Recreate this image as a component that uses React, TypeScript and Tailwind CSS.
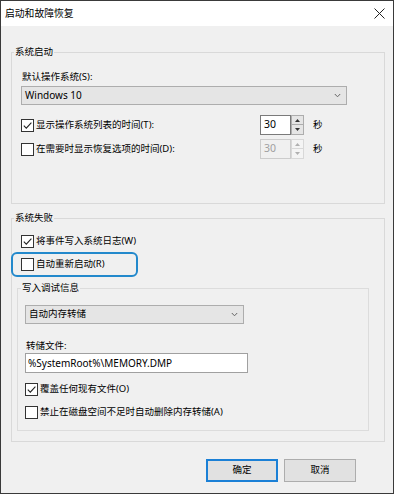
import React from "react";

function Check({ checked }: { checked?: boolean }) {
  return (
    <span className="w-[13px] h-[13px] border border-[#333333] bg-white flex items-center justify-center shrink-0">
      {checked && (
        <svg width="11" height="11" viewBox="0 0 11 11">
          <path d="M1.8 5.6 L4.3 8.1 L9.4 2.6" fill="none" stroke="#222" strokeWidth="1.1" />
        </svg>
      )}
    </span>
  );
}

function Chevron() {
  return (
    <svg width="7" height="5" viewBox="0 0 7 5">
      <path d="M0.8 1 L3.5 3.8 L6.2 1" fill="none" stroke="#666" strokeWidth="1" />
    </svg>
  );
}

function Tri({ up, color }: { up?: boolean; color: string }) {
  return (
    <svg width="5" height="3" viewBox="0 0 5 3">
      <path d={up ? "M0 3 L2.5 0 L5 3 Z" : "M0 0 L2.5 3 L5 0 Z"} fill={color} />
    </svg>
  );
}

function Spin({ disabled }: { disabled?: boolean }) {
  if (disabled) {
    return (
      <div className="flex h-[20px]">
        <div className="w-[31px] h-[20px] border border-[#cccccc] bg-[#f0f0f0] text-[#a0a0a0] pl-[3px] leading-[17px] text-[10.5px]">30</div>
        <div className="flex flex-col w-[13px] h-[20px]">
          <div className="h-[10px] border border-[#d8d8d8] bg-[#f4f4f4] flex items-center justify-center"><Tri up color="#b0b0b0" /></div>
          <div className="h-[10px] border border-t-0 border-[#d8d8d8] bg-[#f4f4f4] flex items-center justify-center"><Tri color="#b0b0b0" /></div>
        </div>
      </div>
    );
  }
  return (
    <div className="flex h-[20px]">
      <div className="w-[31px] h-[20px] border border-[#7a7a7a] bg-white text-black pl-[3px] leading-[17px] text-[10.5px]">30</div>
      <div className="flex flex-col w-[13px] h-[20px]">
        <div className="h-[10px] border border-[#adadad] bg-[#e5e5e5] flex items-center justify-center"><Tri up color="#333" /></div>
        <div className="h-[10px] border border-t-0 border-[#adadad] bg-[#e5e5e5] flex items-center justify-center"><Tri color="#333" /></div>
      </div>
    </div>
  );
}

export default function App() {
  return (
    <div className="w-[394px] h-[494px] border border-[#3a3a3a] bg-[#f0f0f0] text-[9.5px] text-black font-['Noto_Sans','Noto_Sans_CJK_SC',sans-serif] flex flex-col overflow-hidden">
      {/* Title bar */}
      <div className="h-[25px] bg-white flex items-center justify-between pl-[4px] pr-[7px] shrink-0">
        <span className="text-[9.8px] leading-[14px]">启动和故障恢复</span>
        <svg width="11" height="11" viewBox="0 0 11 11" className="mr-[1px]">
          <path d="M0.5 0.5 L10.5 10.5 M10.5 0.5 L0.5 10.5" stroke="#222" strokeWidth="1" />
        </svg>
      </div>

      {/* Group 1 */}
      <fieldset className="mt-[18px] ml-[10px] w-[374px] border border-[#d9d9d9]">
        <legend className="ml-[2px] px-[1px] leading-[16px]">系统启动</legend>
        <div className="flex flex-col pl-[9px] pt-[9px] pb-[44px]">
          <div className="leading-[16px] pl-[1px]">默认操作系统(S):</div>
          <div className="mt-[1px] w-[326px] h-[19px] border border-[#adadad] bg-[#e5e5e5] flex items-center justify-between pl-[3px] pr-[5px]">
            <span className="text-[10px]">Windows 10</span>
            <Chevron />
          </div>
          <div className="mt-[10px] flex items-center h-[20px]">
            <div className="w-[239px] flex items-center gap-[2px]">
              <Check checked />
              <span>显示操作系统列表的时间(T):</span>
            </div>
            <Spin />
            <span className="ml-[9px]">秒</span>
          </div>
          <div className="mt-[4px] flex items-center h-[20px]">
            <div className="w-[239px] flex items-center gap-[2px]">
              <Check />
              <span>在需要时显示恢复选项的时间(D):</span>
            </div>
            <Spin disabled />
            <span className="ml-[9px]">秒</span>
          </div>
        </div>
      </fieldset>

      {/* Group 2 */}
      <fieldset className="mt-[6px] ml-[10px] w-[374px] border border-[#d9d9d9]">
        <legend className="ml-[2px] px-[1px] leading-[16px]">系统失败</legend>
        <div className="flex flex-col pl-[5px] pt-[7px] pb-[10px]">
          <div className="pl-[4px] flex items-center gap-[2px] h-[16px]">
            <Check checked />
            <span>将事件写入系统日志(W)</span>
          </div>
          <div className="relative mt-[7px] pl-[4px] flex items-center gap-[2px] h-[16px]">
            <div className="absolute left-[-6px] top-[-4px] w-[127px] h-[25px] border-2 border-[#2389cc] rounded-[6px]" />
            <Check />
            <span>自动重新启动(R)</span>
          </div>

          {/* Inner group */}
          <fieldset className="mt-[8px] w-[352px] border border-[#dcdcdc]">
            <legend className="ml-[3px] px-[1px] leading-[16px]">写入调试信息</legend>
            <div className="flex flex-col pl-[7px] pt-[9px] pb-[10px]">
              <div className="w-[219px] h-[19px] border border-[#adadad] bg-[#e5e5e5] flex items-center justify-between pl-[3px] pr-[5px]">
                <span>自动内存转储</span>
                <Chevron />
              </div>
              <div className="mt-[15px] leading-[14px] pl-[1px]">转储文件:</div>
              <div className="w-[223px] h-[20px] border border-[#a0a0a0] bg-white pl-[2px] leading-[18px] text-[10px]">%SystemRoot%\MEMORY.DMP</div>
              <div className="mt-[8px] flex items-center gap-[2px] h-[16px]">
                <Check checked />
                <span>覆盖任何现有文件(O)</span>
              </div>
              <div className="mt-[7px] flex items-center gap-[2px] h-[16px]">
                <Check />
                <span>禁止在磁盘空间不足时自动删除内存转储(A)</span>
              </div>
            </div>
          </fieldset>
        </div>
      </fieldset>

      {/* Buttons */}
      <div className="mt-[17px] mr-[37px] flex justify-end gap-[6px]">
        <button className="w-[72px] h-[23px] border-2 border-[#1b80d6] bg-[#e1e1e1] flex items-center justify-center">确定</button>
        <button className="w-[72px] h-[23px] border border-[#adadad] bg-[#e1e1e1] flex items-center justify-center">取消</button>
      </div>
    </div>
  );
}
